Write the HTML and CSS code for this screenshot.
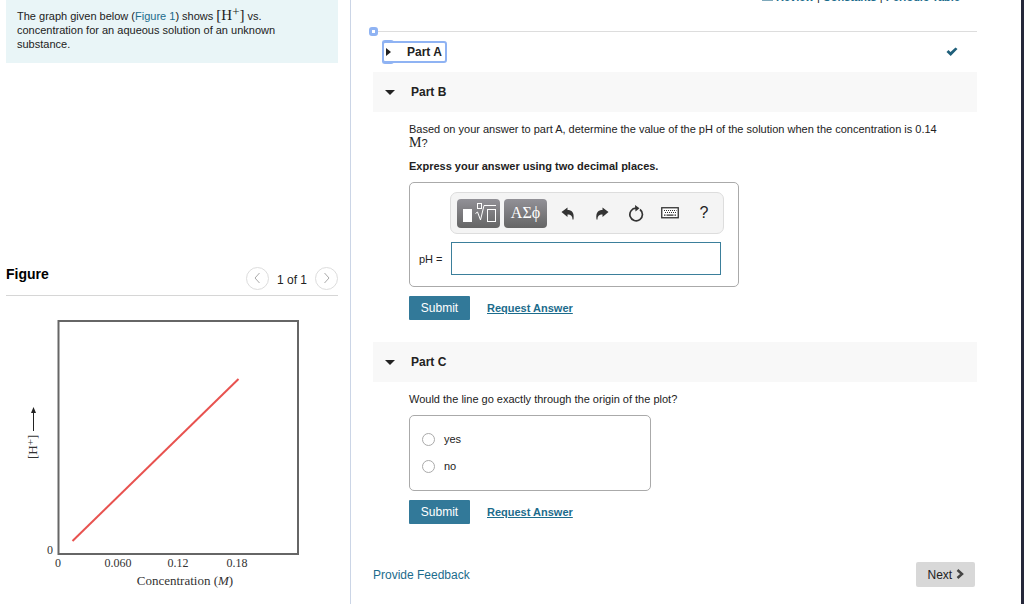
FILE: index.html
```html
<!DOCTYPE html>
<html lang="en">
<head>
    <meta charset="UTF-8">
    <meta name="viewport" content="width=device-width, initial-scale=1.0">
    <title>Item 1</title>
    <link rel="stylesheet" href="styles.css">
</head>
<body>
    <aside class="sidebar">
        <div class="intro">
            The graph given below (<a href="#figure">Figure 1</a>) shows <span class="math">[H<span class="sup">+</span>]</span> vs. concentration for an aqueous solution of an unknown substance.
        </div>

        <section class="figure" id="figure">
            <div class="figure-head">
                <h2>Figure</h2>
                <div class="pager">
                    <button class="round" aria-label="Previous figure">
                        <svg width="8" height="12" viewBox="0 0 8 12"><path d="M6.5 1 L2 6 L6.5 11"/></svg>
                    </button>
                    <span class="count">1 of 1</span>
                    <button class="round" aria-label="Next figure">
                        <svg width="8" height="12" viewBox="0 0 8 12"><path d="M1.5 1 L6 6 L1.5 11"/></svg>
                    </button>
                </div>
            </div>
            <svg class="chart" viewBox="0 0 332 300">
                <rect class="frame" x="52.5" y="25" width="239.5" height="233"/>
                <line class="plot" x1="66.5" y1="245" x2="232.5" y2="83"/>
                <text x="44" y="258" text-anchor="middle">0</text>
                <text x="52" y="271" text-anchor="middle">0</text>
                <text x="112" y="271" text-anchor="middle">0.060</text>
                <text x="172" y="271" text-anchor="middle">0.12</text>
                <text x="231" y="271" text-anchor="middle">0.18</text>
                <text class="axis" x="179" y="289" text-anchor="middle">Concentration (<tspan font-style="italic">M</tspan>)</text>
                <text class="axis" transform="translate(31 163) rotate(-90)">[H<tspan dy="-3" font-size="11">+</tspan><tspan dy="3">]</tspan></text>
                <path class="arrow" d="M27.5 135 V114"/>
                <path class="arrow-head" d="M27.5 111 L30 117 L25 117 Z"/>
            </svg>
        </section>
    </aside>

    <main class="content">
        <nav class="links">
            <svg width="11" height="9" viewBox="0 0 11 9"><rect width="11" height="9" fill="#7fa9bb"/></svg>
            <a href="#">Review</a> | <a href="#">Constants</a> | <a href="#">Periodic Table</a>
        </nav>

        <div class="part part-a">
            <button class="toggle focused"><span class="right"></span>Part A</button>
            <svg class="check" width="12" height="10" viewBox="0 0 12 10"><path d="M0.5 5 L2.5 3 L4.5 5 L9.5 0.5 L11.5 2 L4.7 9 Z"/></svg>
        </div>

        <div class="part">
            <button class="toggle"><span class="down"></span>Part B</button>
        </div>
        <section class="question">
            <p>Based on your answer to part A, determine the value of the pH of the solution when the concentration is 0.14 <span class="unit">M</span>?</p>
            <p><strong>Express your answer using two decimal places.</strong></p>
            <div class="box answer">
                <div class="toolbar">
                    <button class="dark" aria-label="Templates">
                        <svg width="35" height="22" viewBox="0 0 35 22">
                            <rect x="2" y="7" width="9" height="13" fill="#fff"/>
                            <g fill="none" stroke="#fff">
                                <rect x="16.5" y="1.5" width="4" height="5"/>
                                <path d="M14.5 11.5 L16.5 10 L19.5 18 L23 3.5 H35"/>
                                <rect x="26.5" y="7.5" width="8" height="12"/>
                            </g>
                        </svg>
                    </button>
                    <button class="dark">ΑΣϕ</button>
                    <button class="tool" aria-label="Undo">
                        <svg width="14" height="13" viewBox="0 0 14 13"><path d="M0.5 5 L6.5 0.5 V3 C10.5 3 13.5 5 12.5 12.5 H11.5 C11.5 9 10 7.5 6.5 7.5 V10 Z"/></svg>
                    </button>
                    <button class="tool" aria-label="Redo">
                        <svg width="14" height="13" viewBox="0 0 14 13"><path d="M13.5 5 L7.5 0.5 V3 C3.5 3 0.5 5 1.5 12.5 H2.5 C2.5 9 4 7.5 7.5 7.5 V10 Z"/></svg>
                    </button>
                    <button class="tool" aria-label="Reset">
                        <svg width="16" height="17" viewBox="0 0 16 17"><path d="M12 4.5 A6.3 6.3 0 1 1 8 3.2" fill="none" stroke="#333" stroke-width="1.7"/><path d="M7 0 L11.5 3.2 L7.5 6.5 Z"/></svg>
                    </button>
                    <button class="tool" aria-label="Keyboard">
                        <svg width="18" height="12" viewBox="0 0 18 12">
                            <rect x="0.75" y="0.75" width="16.5" height="10" fill="#fff" stroke="#333" stroke-width="1.3"/>
                            <path d="M3 3.5 H15.5 M4 5.5 H15.5" stroke="#333" stroke-dasharray="1 1"/>
                            <path d="M3 8.2 H4.5 M5.5 8.2 H12.5 M13.5 8.2 H15" stroke="#333" stroke-width="1.3"/>
                        </svg>
                    </button>
                    <button class="tool help">?</button>
                </div>
                <label for="ph">pH =</label>
                <input type="text" id="ph">
            </div>
            <div class="actions">
                <button class="submit">Submit</button>
                <a href="#">Request Answer</a>
            </div>
        </section>

        <div class="part">
            <button class="toggle"><span class="down"></span>Part C</button>
        </div>
        <section class="question">
            <p>Would the line go exactly through the origin of the plot?</p>
            <div class="box choices">
                <label><input type="radio" name="origin">yes</label>
                <label><input type="radio" name="origin">no</label>
            </div>
            <div class="actions">
                <button class="submit">Submit</button>
                <a href="#">Request Answer</a>
            </div>
        </section>

        <footer class="bottom">
            <a href="#">Provide Feedback</a>
            <button class="next">Next
                <svg width="8" height="10" viewBox="0 0 8 10"><path d="M1.5 1 L6 5 L1.5 9" fill="none" stroke="#444" stroke-width="2.5"/></svg>
            </button>
        </footer>
    </main>
</body>
</html>
```
FILE: styles.css
```css
*,
*::before {
    box-sizing: border-box;
}

body {
    margin: 0;
    min-height: 100vh;
    display: flex;
    background: #fff;
    color: #222;
    font-family: "Liberation Sans", Arial, sans-serif;
    font-size: 11px;
    line-height: 14px;
    border-right: 3px solid #25283a;
}

a {
    color: #1c6c8c;
}

button {
    font-family: inherit;
    color: inherit;
    border: none;
    padding: 0;
    cursor: pointer;
}

/* left column */
.sidebar {
    flex: 0 0 351px;
    padding: 0 12px 0 6px;
    border-right: 1px solid #cbd5e6;
}

.intro {
    height: 63px;
    padding: 9px 40px 0 11px;
    background: #e9f5f7;
}

.intro a {
    text-decoration: none;
}

.math {
    font-family: "Liberation Serif", serif;
    font-size: 15px;
    line-height: 12px;
}

.sup {
    position: relative;
    top: -4px;
    font-size: 13px;
}

.figure {
    margin-top: 202px;
}

.figure-head {
    display: flex;
    justify-content: space-between;
    height: 31px;
    border-bottom: 1px solid #d6d6d6;
}

.figure h2 {
    margin: 0;
    color: #000;
    font-size: 14px;
    line-height: 18px;
}

.pager {
    display: flex;
    align-items: center;
    gap: 8px;
    height: 26px;
    font-size: 12px;
}

.count {
    padding-top: 3px;
}

.round {
    display: flex;
    align-items: center;
    justify-content: center;
    width: 23px;
    height: 23px;
    background: #fff;
    border: 1px solid #ddd;
    border-radius: 50%;
}

.round path {
    fill: none;
    stroke: #aaa;
}

.chart {
    display: block;
    width: 100%;
    font-family: "Liberation Serif", serif;
    font-size: 12px;
    fill: #333;
}

.axis {
    font-size: 13px;
}

.frame {
    fill: none;
    stroke: #666;
    stroke-width: 2;
}

.plot {
    stroke: #e8524f;
    stroke-width: 2;
}

.arrow {
    stroke: #222;
}

.arrow-head {
    fill: #222;
}

/* right column */
.content {
    flex: 1;
    padding: 0 44px 0 22px;
}

.links {
    height: 32px;
    margin-top: -10px;
    margin-bottom: 10px;
    padding-right: 17px;
    text-align: right;
}

.links a {
    font-weight: bold;
    text-decoration: none;
}

.part {
    display: flex;
    align-items: center;
    height: 40px;
    background: #f8f8f8;
}

.part-a {
    position: relative;
    justify-content: space-between;
    height: 41px;
    margin-top: -1px;
    padding: 0 19px 0 9px;
    background: #fff;
    border-top: 1px solid #ddd;
}

/* anchor mark on the rule */
.part-a::before {
    content: "";
    position: absolute;
    left: -4px;
    top: -5px;
    width: 9px;
    height: 9px;
    border: 3px solid #8fb3f3;
    border-radius: 3px;
    background: #fff;
}

.check {
    fill: #1f5f7a;
}

.toggle {
    display: flex;
    align-items: center;
    padding-left: 12px;
    background: none;
    font-size: 12px;
    font-weight: bold;
}

.right {
    width: 5px;
    margin-right: 16px;
    border-left: 5px solid #222;
    border-top: 4px solid transparent;
    border-bottom: 4px solid transparent;
}

.down {
    margin-right: 16px;
    border-top: 5px solid #222;
    border-left: 5px solid transparent;
    border-right: 5px solid transparent;
}

.focused {
    position: relative;
    height: 22px;
    padding: 0 3px 0 2px;
    border: 2px solid #8fb3f3;
    border-radius: 3px;
}

/* ring bulges round the arrow */
.focused::before {
    content: "";
    position: absolute;
    left: -2px;
    top: -3px;
    bottom: -3px;
    width: 12px;
    border: 2px solid #8fb3f3;
    border-right: none;
    border-radius: 3px;
}

.question {
    padding: 10px 0 22px 36px;
}

.question p {
    margin: 0 24px 9px 0;
}

.unit {
    font-family: "Liberation Serif", serif;
    font-size: 14px;
    line-height: 12px;
}

.box {
    border: 1px solid #aaa;
    border-radius: 5px;
}

.answer {
    display: grid;
    grid-template-columns: 31px 274px;
    row-gap: 8px;
    align-items: center;
    width: 330px;
    height: 105px;
    padding: 9px;
    align-content: start;
}

.toolbar {
    grid-column: 2;
    display: flex;
    align-items: center;
    height: 42px;
    padding: 0 2px 0 6px;
    background: #f4f4f4;
    border: 1px solid #ddd;
    border-radius: 7px;
}

.dark {
    display: flex;
    align-items: center;
    justify-content: center;
    width: 43px;
    height: 29px;
    margin-right: 4px;
    background: linear-gradient(#929197, #656565);
    border-radius: 4px;
    color: #fff;
    font-family: "Liberation Serif", serif;
    font-size: 16px;
}

.tool {
    flex: 1;
    display: flex;
    align-items: center;
    justify-content: center;
    height: 29px;
    background: none;
    fill: #333;
}

.help {
    font-size: 16px;
}

.answer input {
    width: 270px;
    height: 33px;
    margin-left: 1px;
    padding: 4px 6px;
    border: 1px solid #3b7f9b;
    font-size: 14px;
}

.actions {
    display: flex;
    align-items: center;
    gap: 17px;
    margin-top: 9px;
}

.actions a {
    font-weight: bold;
}

.submit {
    width: 61px;
    height: 24px;
    background: #327999;
    border-radius: 1px;
    color: #fff;
    font-size: 12px;
}

.choices {
    display: flex;
    flex-direction: column;
    gap: 13px;
    width: 242px;
    height: 76px;
    padding: 16px 12px;
}

.choices label {
    display: flex;
    align-items: center;
    gap: 9px;
}

.choices input {
    appearance: none;
    width: 13px;
    height: 13px;
    margin: 0;
    border: 1px solid #aaa;
    border-radius: 50%;
}

.choices input:checked {
    border: 4px solid #327999;
}

.bottom {
    display: flex;
    align-items: center;
    justify-content: space-between;
    margin-top: 16px;
    padding-right: 2px;
    font-size: 12px;
}

.bottom a {
    text-decoration: none;
}

.next {
    width: 59px;
    height: 25px;
    background: #d8d8d8;
    border-radius: 2px;
    font-size: 12px;
}
```
